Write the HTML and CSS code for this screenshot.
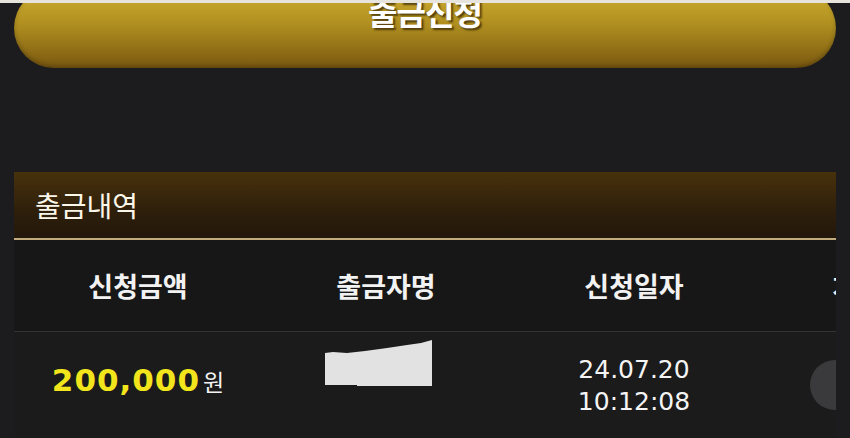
FILE: index.html
```html
<!DOCTYPE html>
<html>

<head>
    <title>출금내역</title>
    <link rel="stylesheet" href="styles.css">
</head>

<body>
    <div class="topbar"></div>
    <div class="page">
        <div class="apply-wrap">
            <button class="apply-btn">출금신청</button>
        </div>

        <div class="history">
            <div class="history-title">출금내역</div>
            <div class="table-scroll">
                <table class="history-table">
                    <thead>
                        <tr>
                            <th>신청금액</th>
                            <th>출금자명</th>
                            <th>신청일자</th>
                            <th>처리상태</th>
                        </tr>
                    </thead>
                    <tbody>
                        <tr>
                            <td><span class="amount">200,000</span><span class="won">원</span></td>
                            <td>
                                <svg class="blur" width="108" height="48" viewBox="0 0 108 48">
                                    <path d="M0 13 L8 12 L22 13 L40 11 L62 8 L82 5 L96 3 L107 0 L107 46 L32 46 L32 45 L0 45 Z" fill="#e3e2e3"/>
                                </svg>
                            </td>
                            <td class="date">24.07.20<br>10:12:08</td>
                            <td><span class="pill">대기</span></td>
                        </tr>
                    </tbody>
                </table>
            </div>
        </div>
    </div>
</body>

</html>
```

FILE: styles.css
```css
html, body {
    margin: 0;
    padding: 0;
    height: 100%;
    overflow: hidden;
    background-color: #1c1c1e;
    font-family: "Noto Sans CJK KR", "Noto Sans", sans-serif;
    color: #fff;
}

.topbar {
    height: 3px;
    background-color: #e7e4de;
}

.page {
    padding: 0 14px;
}

.apply-wrap {
    height: 65px;
    overflow: hidden;
}

.apply-btn {
    display: block;
    width: 100%;
    height: 80px;
    margin-top: -15px;
    border: none;
    border-radius: 40px;
    background: linear-gradient(#cfb032, #b08f20 45%, #7a5810);
    box-shadow: inset 0 -2px 4px rgba(0,0,0,0.25);
    color: #fff;
    font-family: "Noto Sans CJK KR", sans-serif;
    font-size: 32px;
    font-weight: bold;
    letter-spacing: -1px;
    line-height: 1;
    padding: 0 0 34px 0;
    text-shadow: 2px 2px 2px rgba(40,25,0,0.7);
}

.history {
    margin-top: 104px;
}

.history-title {
    height: 66px;
    padding-left: 21px;
    display: flex;
    align-items: center;
    background: linear-gradient(#48310c, #2e1f0b 60%, #22170b);
    border-bottom: 2px solid #c2ab7c;
    font-size: 28px;
    font-weight: normal;
    color: #fbf6ea;
}

.table-scroll {
    width: 100%;
    overflow: hidden;
    contain: paint;
}

.history-table {
    border-collapse: collapse;
    table-layout: fixed;
    width: 992px;
}

.history-table th,
.history-table td {
    width: 248px;
    text-align: center;
    padding: 0;
}

.history-table th {
    height: 91px;
    background-color: #171717;
    border-bottom: 1px solid #343434;
    font-size: 27px;
    font-weight: bold;
    color: #f2f2f2;
}

.history-table td {
    height: 98px;
    background-color: #1b1b1b;
    vertical-align: top;
    padding-top: 8px;
}

.amount {
    display: inline-block;
    margin-top: 22px;
    font-family: "DejaVu Sans", sans-serif;
    font-size: 31px;
    font-weight: bold;
    color: #f3e51c;
    letter-spacing: 1px;
}

.won {
    font-size: 23px;
    color: #f4f4f4;
    margin-left: 3px;
}

.blur {
    display: block;
    margin: 0 0 0 63px;
}

.date {
    font-family: "DejaVu Sans", sans-serif;
    font-size: 25px;
    line-height: 32px;
    color: #f4f4f4;
}

.history-table td.date {
    padding-top: 22px;
    height: 84px;
}

.pill {
    display: inline-block;
    width: 144px;
    height: 50px;
    margin-top: 20px;
    border-radius: 25px;
    background-color: #3a3a3c;
    line-height: 50px;
    font-size: 20px;
}
```
